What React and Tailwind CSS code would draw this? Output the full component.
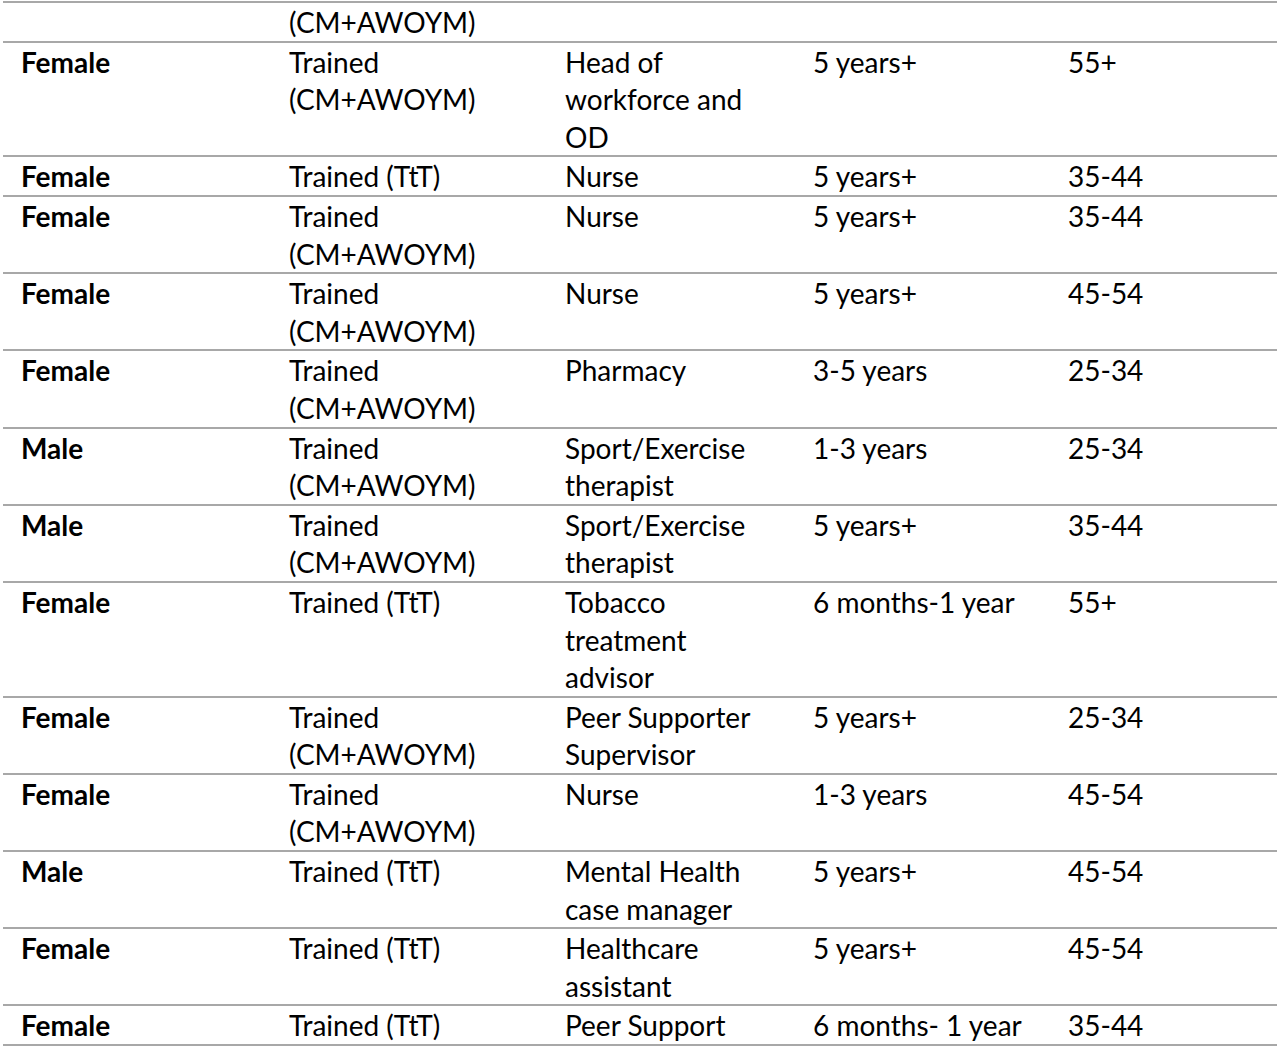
import React from "react";

const rows = [
  { cells: [[""], ["(CM+AWOYM)"], [""], [""], [""]] },
  { cells: [["Female"], ["Trained", "(CM+AWOYM)"], ["Head of", "workforce and", "OD"], ["5 years+"], ["55+"]] },
  { cells: [["Female"], ["Trained (TtT)"], ["Nurse"], ["5 years+"], ["35-44"]] },
  { cells: [["Female"], ["Trained", "(CM+AWOYM)"], ["Nurse"], ["5 years+"], ["35-44"]] },
  { cells: [["Female"], ["Trained", "(CM+AWOYM)"], ["Nurse"], ["5 years+"], ["45-54"]] },
  { cells: [["Female"], ["Trained", "(CM+AWOYM)"], ["Pharmacy"], ["3-5 years"], ["25-34"]] },
  { cells: [["Male"], ["Trained", "(CM+AWOYM)"], ["Sport/Exercise", "therapist"], ["1-3 years"], ["25-34"]] },
  { cells: [["Male"], ["Trained", "(CM+AWOYM)"], ["Sport/Exercise", "therapist"], ["5 years+"], ["35-44"]] },
  { cells: [["Female"], ["Trained (TtT)"], ["Tobacco", "treatment", "advisor"], ["6 months-1 year"], ["55+"]] },
  { cells: [["Female"], ["Trained", "(CM+AWOYM)"], ["Peer Supporter", "Supervisor"], ["5 years+"], ["25-34"]] },
  { cells: [["Female"], ["Trained", "(CM+AWOYM)"], ["Nurse"], ["1-3 years"], ["45-54"]] },
  { cells: [["Male"], ["Trained (TtT)"], ["Mental Health", "case manager"], ["5 years+"], ["45-54"]] },
  { cells: [["Female"], ["Trained (TtT)"], ["Healthcare", "assistant"], ["5 years+"], ["45-54"]] },
  { cells: [["Female"], ["Trained (TtT)"], ["Peer Support"], ["6 months- 1 year"], ["35-44"]] },
];

export default function App() {
  return (
    <div
      className="w-[1280px] h-[1050px] bg-white overflow-hidden pt-[1px] text-black"
      style={{ fontFamily: "Lato, 'Open Sans', sans-serif" }}
    >
      <div className="mx-[3px] border-b-2 border-[#a8a8a8]">
        {rows.map((row, i) => (
          <div
            key={i}
            className="grid grid-cols-[268px_276px_248px_255px_1fr] pl-[18px] border-t-2 border-[#a8a8a8] text-[28px] leading-[37.6px]"
          >
            {row.cells.map((lines, j) => (
              <div key={j} className={j === 0 ? "font-bold" : ""}>
                {lines.map((l, k) => (
                  <div key={k} className="whitespace-nowrap h-[37.6px] pt-[1px]">
                    {l}
                  </div>
                ))}
              </div>
            ))}
          </div>
        ))}
      </div>
    </div>
  );
}
